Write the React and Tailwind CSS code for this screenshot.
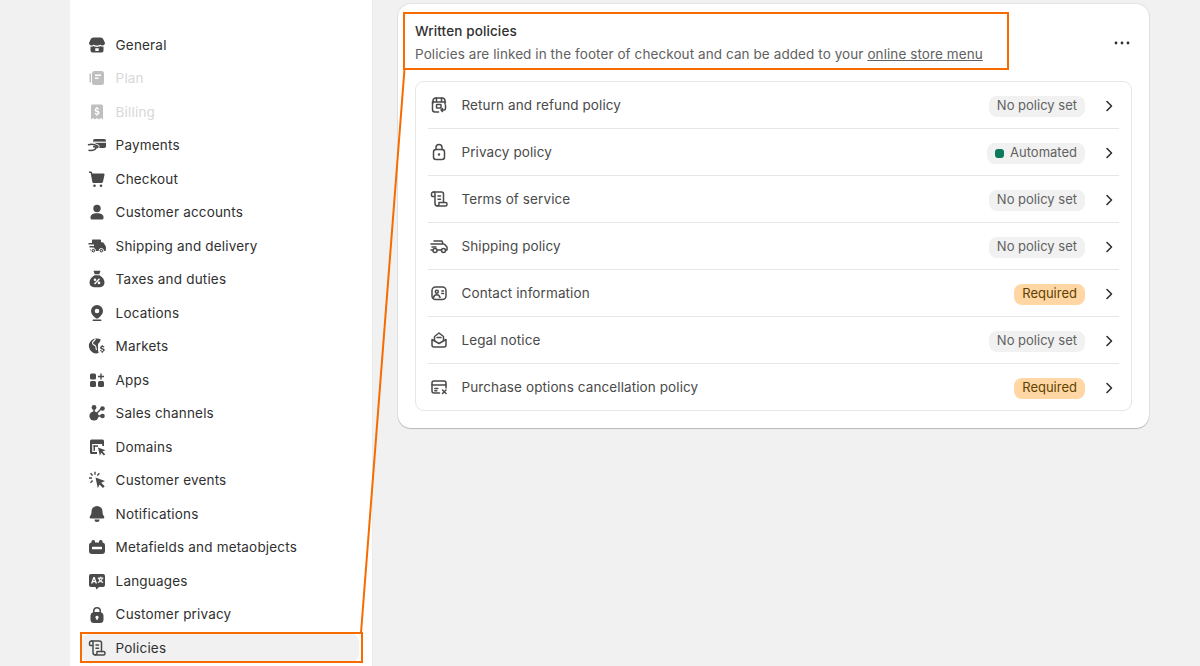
import React from "react";

const c = "currentColor";
const F = ({ children }) => (
  <svg viewBox="0 0 20 20" className="w-5 h-5 shrink-0 text-[#4a4a4a]" fill={c}>{children}</svg>
);
const S = ({ children }) => (
  <svg viewBox="0 0 20 20" className="w-5 h-5 shrink-0 text-[#4a4a4a]" fill="none" stroke={c} strokeWidth="1.5" strokeLinecap="round" strokeLinejoin="round">{children}</svg>
);

const Ic = {
  general: <F><path d="M6.500 2.500h7c1.400 0 2.400.8 2.900 1.900L18 8c0 1.500-1.200 2.500-2.500 2.500-.9 0-1.700-.5-2.200-1.100-.6.7-1.500 1.100-2.400 1.100h-1.800c-.9 0-1.800-.4-2.400-1.100-.5.6-1.300 1.100-2.200 1.100C3.200 10.500 2 9.500 2 8l1.600-3.600C4.100 3.300 5.100 2.500 6.500 2.500z" /><path fillRule="evenodd" d="M3.500 11.500c.9.300 2.100.2 3-.4 1 .6 2 .9 3.500.9s2.500-.3 3.500-.9c.9.600 2.100.7 3 .4V15.500a2 2 0 0 1-2 2h-9a2 2 0 0 1-2-2v-4zM8.300 13.200v2.800h3.400v-2.800H8.300z" /></F>,
  plan: <F><path d="M2.500 5.500h1.500v9H2.500z" /><path fillRule="evenodd" d="M7.500 3h7A2.500 2.500 0 0 1 17 5.500v9a2.500 2.500 0 0 1-2.500 2.500h-7A2.500 2.500 0 0 1 5 14.500v-9A2.500 2.500 0 0 1 7.500 3zM8 6.500V8h6V6.500H8zM8 9.500V11h3.500V9.500H8z" /></F>,
  billing: <F><path fillRule="evenodd" d="M5.500 2.500h9A1.500 1.500 0 0 1 16 4v13.500l-2-1.500-2 1.500-2-1.500-2 1.500-2-1.500-2 1.500V4a1.500 1.500 0 0 1 1.500-1.500zM9.300 5v1c-1 .2-1.800.9-1.800 2 0 1.200 1 1.700 2 2 1 .3 1.300.5 1.300.9s-.4.700-1 .7c-.7 0-1.200-.3-1.500-.8l-.9.7c.4.600 1.100 1 1.900 1.200v1h1.400v-1c1.100-.2 1.800-1 1.800-2 0-1.300-1-1.800-2-2.100-1-.3-1.300-.5-1.300-.9 0-.3.400-.6 1-.6.500 0 1 .2 1.300.6l.9-.8c-.4-.5-1-.8-1.700-1V5H9.300z" /></F>,
  payments: <F><rect x="6" y="4" width="13" height="9" rx="1.800" /><rect x="6" y="6.600" width="13" height="1.200" fill="#fff" /><path d="M1.500 9.800c2-.8 4-.8 6 0l3 1.200c.9.400.4 1.700-.5 1.400L7 11.700" fill="none" stroke="#fff" strokeWidth="3.200" /><path d="M1.500 9.800c2-.8 4-.8 6 0l3 1.200c.9.400.4 1.700-.5 1.400L7 11.700" fill="none" stroke={c} strokeWidth="1.500" strokeLinecap="round" /><path d="M2 15.300c2.200.5 4.200.1 6-1 1-.6 1.100-1.200.5-2" fill="none" stroke={c} strokeWidth="1.500" strokeLinecap="round" /></F>,
  checkout: <F><path d="M2 2.500h1.500c.8 0 1.400.4 1.600 1.200l.2.800h11.200c.7 0 1.200.7 1 1.300l-1.500 7c-.2.600-.7 1.200-1.500 1.200H6.800c-.8 0-1.400-.5-1.500-1.300L3.700 4.300c0-.2-.1-.3-.3-.3H2V2.500z" /><circle cx="7.500" cy="16.800" r="1.300" /><circle cx="14" cy="16.800" r="1.300" /></F>,
  person: <F><circle cx="10" cy="6.500" r="3.700" /><path d="M3.500 15.300c0-2.500 2.500-4 6.500-4s6.500 1.500 6.500 4V16a1.500 1.500 0 0 1-1.500 1.500H5A1.500 1.500 0 0 1 3.500 16v-.7z" /></F>,
  truck: <F><path d="M5.500 3.500h7.500a1 1 0 0 1 1 1v1.800h1.300c.7 0 1.300.3 1.600.9l1.700 2.900c.2.300.3.600.3.900V14a1 1 0 0 1-1 1H3.500V13H7v-1.400H2.500V10H7V8.500H1.500V7H5V4a.5.5 0 0 1 .5-.5z" /><circle cx="6.300" cy="14.700" r="2.200" stroke="#fff" strokeWidth="1" /><circle cx="14.300" cy="14.700" r="2.200" stroke="#fff" strokeWidth="1" /><circle cx="6.300" cy="14.700" r=".7" fill="#fff" /><circle cx="14.300" cy="14.700" r=".7" fill="#fff" /></F>,
  taxes: <F><path fillRule="evenodd" d="M6.500 1.800h7l-1.200 3.400H7.700L6.500 1.800zM7.500 6.300h5C15.300 8 17.500 10.500 17.500 13.500c0 2.800-2 4.700-4.500 4.700H7c-2.500 0-4.500-1.900-4.500-4.700 0-3 2.200-5.500 5-7.200zM12 9.300l-5 5.300 1 1 5-5.300-1-1zM8 9.500a1.300 1.300 0 1 0 0 2.600 1.300 1.300 0 0 0 0-2.600zM12 12.600a1.300 1.300 0 1 0 0 2.600 1.300 1.300 0 0 0 0-2.600z" /></F>,
  location: <F><path fillRule="evenodd" d="M10 2a6 6 0 0 1 6 6c0 3-2.500 5.500-4.800 7.200-.7.500-1.700.5-2.400 0C6.500 13.500 4 11 4 8a6 6 0 0 1 6-6zm0 3.700a2.300 2.300 0 1 0 0 4.600 2.300 2.300 0 0 0 0-4.600z" /><rect x="5.500" y="16.500" width="9" height="1.500" rx=".7" /></F>,
  markets: <F><path d="M10 2.500c1.400 0 2.700.4 3.800 1.100L13 5.500c-.5 1-1.300 1.300-1.800 2.300-.6 1.400.1 2.800-.2 4.200-.2 1 .1 2.800.7 5.100a7.500 7.500 0 1 1-1.700-14.600z" /><path d="M8.500 3c-.8 1.900-2.900 2-3 4 0 1.800 2 1.700 3 3 .8 1 .3 2.500 1 4" fill="none" stroke="#fff" strokeWidth="1.100" /><path d="M15.700 9v.8c.9.100 1.600.6 1.800 1.300l-1 .4c-.2-.3-.5-.5-1-.5-.5 0-.8.300-.8.600 0 .4.400.5 1 .7 1 .3 2 .6 2 1.800 0 .9-.7 1.500-2 1.700V17h-1v-1.200c-.9-.2-1.500-.6-1.800-1.300l1-.4c.2.400.7.800 1.300.8.500 0 .9-.3.900-.6 0-.4-.4-.5-1.100-.8-.9-.3-1.900-.6-1.900-1.700 0-.9.600-1.500 1.600-1.700V9h1z" /></F>,
  apps: <F><rect x="3" y="3.500" width="6" height="6" rx="1.500" /><rect x="3" y="11" width="6" height="6" rx="1.500" /><rect x="11" y="11" width="6" height="6" rx="1.500" /><path d="M13.300 3.500h1.400v2.300H17v1.400h-2.300v2.300h-1.400V7.200H11V5.800h2.300z" /></F>,
  channels: <F><circle cx="7" cy="4.500" r="2.400" /><circle cx="15.500" cy="5.500" r="2.300" /><circle cx="15.500" cy="13" r="2.300" /><circle cx="7" cy="13" r="4.600" /><path d="M6.300 6h1.500v4H6.300zM9 10l5-5 1 1-5 5zM11 12.300h3v1.500h-3z" /></F>,
  domains: <F><path d="M4.500 2.500h11A1.500 1.500 0 0 1 17 4v5h-1.800V7H5.200v8H10v2H4.500A1.500 1.500 0 0 1 3 15.500V4a1.500 1.500 0 0 1 1.500-1.500z" /><rect x="6.500" y="8.300" width="4.500" height="1.500" /><rect x="6.500" y="8.300" width="1.500" height="5.500" /><path d="M11 10.500l7.500 2.700-3 1.300 2.700 2.700-1.300 1.300-2.700-2.700-1.300 3z" /></F>,
  events: <F><path d="M8.500 7.500l9.500 3.600-3.800 1.700 3.500 3.500-1.700 1.700-3.500-3.500-1.700 3.800z" /><path d="M7.300 1.800h1.400v3H7.300zM2 7.300h3v1.400H2zM3 3.800l1-1 2.100 2.100-1 1zM5.100 10.100l1 1L4 13.200l-1-1zM11.900 2.800l1 1-2.100 2.100-1-1z" /></F>,
  bell: <F><path d="M10 2a5.500 5.500 0 0 1 5.500 5.500c0 2 .5 3.500 1.600 5 .6.900 0 2-1 2H3.900c-1 0-1.600-1.100-1-2C4 11 4.500 9.500 4.500 7.500A5.500 5.500 0 0 1 10 2z" /><path d="M7.500 15.500h5a2.500 2.500 0 0 1-5 0z" /></F>,
  meta: <F><rect x="4.500" y="3" width="3.500" height="5" rx="1.500" /><rect x="12" y="3" width="3.500" height="5" rx="1.500" /><rect x="2" y="5.500" width="16" height="11.500" rx="3" /><rect x="5" y="9.700" width="10" height="2.600" rx=".6" fill="#fff" /></F>,
  lang: <F><path fillRule="evenodd" d="M4 3h12a2 2 0 0 1 2 2v9a2 2 0 0 1-2 2h-4l-2.500 2.500L8.500 16H4a2 2 0 0 1-2-2V5a2 2 0 0 1 2-2zM6.300 6L4 12.500h1.500l.4-1.200h2.300l.4 1.200H10L7.700 6H6.300zM7 8l.8 2.100H6.300L7 8zM13.300 5.500v1.100h-2.500v1.200h.6c.3.900.7 1.600 1.200 2.200-.6.400-1.200.7-2 .9l.5 1.100c.9-.3 1.700-.7 2.400-1.200.7.500 1.500.9 2.400 1.200l.5-1.100c-.8-.2-1.400-.5-2-.9.5-.6 1-1.300 1.200-2.200h.7V6.600h-2.100V5.500h-.9zM12.700 7.800h2c-.2.500-.5 1-1 1.400-.4-.4-.8-.9-1-1.400z" /></F>,
  lock: <F><path fillRule="evenodd" d="M10 2a4 4 0 0 1 4 4v1.200A3.500 3.500 0 0 1 16.500 10.500v4A3.500 3.500 0 0 1 13 18H7a3.500 3.500 0 0 1-3.500-3.500v-4A3.500 3.500 0 0 1 6 7.200V6a4 4 0 0 1 4-4zM7.500 6v1h5V6a2.500 2.500 0 0 0-5 0zM10 10.700a1.600 1.600 0 0 0-.8 3v1h1.600v-1a1.600 1.600 0 0 0-.8-3z" /></F>,
  scroll: <S><path d="M5.500 7.500H3.700a1.200 1.200 0 0 1-1.200-1.200V5A2 2 0 0 1 4.500 3h8A2 2 0 0 1 14.500 5v8.500" /><path d="M4.500 3A1.500 1.500 0 0 1 6 4.500V14.500A2.500 2.500 0 0 0 8.500 17" /><path d="M9 7h2.500M9 10.300h2.500" /><path d="M8.500 17h8a1.500 1.500 0 0 0 1.500-1.500v-.5a1.500 1.500 0 0 0-1.500-1.500H10V15a2 2 0 0 1-1.500 2" /></S>,
  ret: <S><path d="M4 8V6c0-1.700 1.300-3 3-3h6c1.700 0 3 1.300 3 3v3" /><path d="M7.500 3v3.500M12.500 3v3.500M3.500 7h13" /><path d="M9.500 17H6a2.500 2.500 0 0 1-2.500-2.500V7" /><rect x="7.500" y="9.500" width="4.500" height="3.500" rx=".5" /><path d="M16.500 10v3.500a1.500 1.500 0 0 1-1.500 1.500h-3l1.500-1.500M12 15l1.500 1.500" /></S>,
  lockO: <S><rect x="4.500" y="7.500" width="11" height="10" rx="2.500" /><path d="M7 7.500V5.500a3 3 0 0 1 6 0v2" /><circle cx="10" cy="12.500" r=".5" fill={c} /></S>,
  truckO: <S><path d="M5 5h8l1 3M5 8h9.500c.6 0 1 .2 1.300.6L18 11v3h-1.500M2 8h3.500M3 11h4M2 14h1.500M8.500 14h4" /><circle cx="6" cy="14.500" r="2" /><circle cx="14.500" cy="14.500" r="2" /></S>,
  contact: <S><rect x="3" y="4" width="14" height="12.500" rx="3.500" /><circle cx="7.800" cy="8.800" r="1.500" /><path d="M4.500 14.500c.5-1.700 1.800-2.700 3.300-2.700s2.700 1 3.200 2.700M12.800 8h1.700M12.800 10.500h1.700" /></S>,
  mail: <S><path d="M3 9.500V15a2 2 0 0 0 2 2h10a2 2 0 0 0 2-2V9.500L10 13.500 3 9.500z" /><path d="M5.500 10.500V6.500L10 3l4.500 3.500v4" /><path d="M8 7.500h4" /></S>,
  card: <S><path d="M10.500 16H5a2 2 0 0 1-2-2V6a2 2 0 0 1 2-2h10a2 2 0 0 1 2 2v5" /><path d="M3 8h14M5.800 11.500h3M5.800 13.800h2" /><path d="M13.500 13l3.500 3.500M17 13l-3.500 3.500" /></S>,
};

const nav = [
  ["General", "general"],
  ["Plan", "plan", true],
  ["Billing", "billing", true],
  ["Payments", "payments"],
  ["Checkout", "checkout"],
  ["Customer accounts", "person"],
  ["Shipping and delivery", "truck"],
  ["Taxes and duties", "taxes"],
  ["Locations", "location"],
  ["Markets", "markets"],
  ["Apps", "apps"],
  ["Sales channels", "channels"],
  ["Domains", "domains"],
  ["Customer events", "events"],
  ["Notifications", "bell"],
  ["Metafields and metaobjects", "meta"],
  ["Languages", "lang"],
  ["Customer privacy", "lock"],
  ["Policies", "scroll", false, true],
];

const rows = [
  ["Return and refund policy", "ret", "none"],
  ["Privacy policy", "lockO", "auto"],
  ["Terms of service", "scroll", "none"],
  ["Shipping policy", "truckO", "none"],
  ["Contact information", "contact", "req"],
  ["Legal notice", "mail", "none"],
  ["Purchase options cancellation policy", "card", "req"],
];

function Badge({ kind }) {
  if (kind === "auto")
    return (
      <span className="flex items-center h-[21px] px-[8px] gap-[6px] rounded-[8px] bg-[#f1f1f1] text-[#616161] text-[13px]">
        <span className="w-[9px] h-[9px] rounded-[3px] bg-[#0b7a5a]" />
        Automated
      </span>
    );
  if (kind === "req")
    return (
      <span className="flex items-center h-[21px] px-[8px] rounded-[8px] bg-[#ffd6a4] text-[#5e4200] text-[13px]">
        Required
      </span>
    );
  return (
    <span className="flex items-center h-[21px] px-[8px] rounded-[8px] bg-[#f1f1f1] text-[#616161] text-[13px]">
      No policy set
    </span>
  );
}

export default function App() {
  return (
    <div className="relative flex w-[1200px] h-[666px] overflow-hidden bg-[#f1f1f1] font-['Inter',sans-serif]">
      <aside className="ml-[70px] w-[303px] h-full bg-white border-r border-[#ebebeb] pt-[31px] pl-[12px] pr-[13px] shrink-0">
        {nav.map(([label, icon, disabled, active]) => (
          <div
            key={label}
            className={`flex items-center h-[27.5px] mb-[6.03px] pl-[5px] gap-[8.6px] rounded-[8px] text-[13.5px] tracking-[0.18px] ${
              active ? "bg-[#f1f1f1]" : ""
            } ${disabled ? "text-[#d8d8d8]" : "text-[#303030]"}`}
          >
            <span className={disabled ? "opacity-35" : ""}>{Ic[icon]}</span>
            <span>{label}</span>
          </div>
        ))}
      </aside>

      <main className="ml-[25px] mt-[4px] w-[751px] self-start bg-white rounded-[13px] shadow-[0_1px_1px_rgba(0,0,0,0.2),0_0_0_1px_rgba(0,0,0,0.05)] px-[17px] pb-[17px]">
        <div className="flex items-start justify-between h-[77px] pt-[19px]">
          <div>
            <h2 className="text-[13.5px] leading-[17px] font-[450] text-[#303030] tracking-[0.12px]">Written policies</h2>
            <p className="mt-[5.5px] text-[13.5px] leading-[17px] text-[#616161] tracking-[0.085px]">
              Policies are linked in the footer of checkout and can be added to your{" "}
              <span className="underline">online store menu</span>
            </p>
          </div>
          <svg viewBox="0 0 16 4" className="w-4 h-1 mt-[18px] mr-[2px] text-[#303030]" fill={c}>
            <circle cx="2" cy="2" r="1.400" />
            <circle cx="8" cy="2" r="1.400" />
            <circle cx="14" cy="2" r="1.400" />
          </svg>
        </div>
        <div className="rounded-[9px] border border-[#e6e6e6] px-[12px]">
          {rows.map(([label, icon, kind], i) => (
            <div
              key={label}
              className={`flex items-center ${i < rows.length - 1 ? "h-[47px] border-b border-[#e6e6e6]" : "h-[46px]"}`}
            >
              <span className="ml-[1px] w-[32.5px]">{Ic[icon]}</span>
              <span className="text-[13.5px] text-[#4a4a4a] tracking-[0.1px]">{label}</span>
              <span className="ml-auto mr-[14px] mt-[2px]"><Badge kind={kind} /></span>
              <svg viewBox="0 0 20 20" className="w-5 h-5 mt-[1px] text-[#303030]" fill="none" stroke={c} strokeWidth="1.600" strokeLinecap="round" strokeLinejoin="round">
                <path d="M8 5.500l4.500 4.500L8 14.500" />
              </svg>
            </div>
          ))}
        </div>
      </main>

      {/* annotation overlays */}
      <div className="absolute left-[403px] top-[12px] w-[606px] h-[58px] border-2 border-[#f76b00]" />
      <div className="absolute left-[80px] top-[632px] w-[283px] h-[31px] border-2 border-[#f76b00]" />
      <svg className="absolute left-0 top-0 pointer-events-none" width="1200" height="666" fill="none">
        <line x1="404.500" y1="69" x2="361" y2="633" stroke="#f76b00" strokeWidth="2" />
      </svg>
    </div>
  );
}
